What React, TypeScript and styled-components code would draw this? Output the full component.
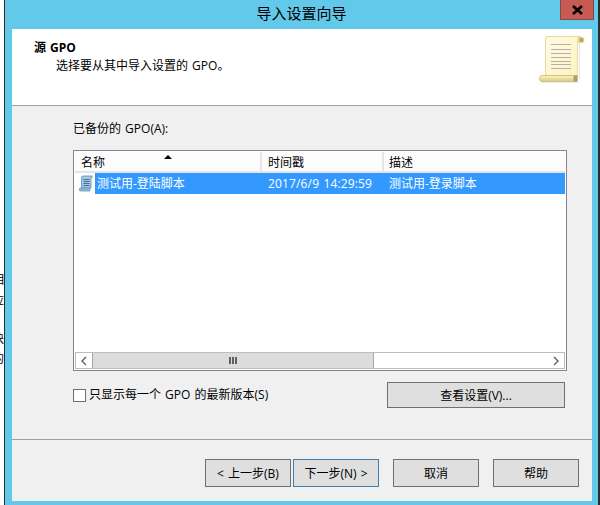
import styled, { createGlobalStyle } from "styled-components";

const GlobalStyle = createGlobalStyle`
  html, body {
    margin: 0;
    padding: 0;
    background: #fff;
  }
  * {
    box-sizing: border-box;
  }
`;

const Page = styled.div`
  display: flex;
  width: 600px;
  height: 505px;
  overflow: hidden;
  font-family: "Open Sans", "Noto Sans CJK SC", sans-serif;
  font-size: 12px;
  word-spacing: 1px;
  color: #000;
`;

const Backdrop = styled.div`
  flex: 0 0 4px;
  padding-top: 272px;
  overflow: hidden;
  background: #fff;
`;

const BackdropLine = styled.div<{ $gap: number }>`
  margin: ${(p) => p.$gap}px 0 0 -8px;
  width: 12px;
  height: 16px;
  line-height: 16px;
`;

const Frame = styled.div`
  position: relative;
  flex: 1;
  display: flex;
  flex-direction: column;
  padding: 0 6px 4px 7px;
  background: #63c9ea;
  border-left: 1px solid #2b2b2b;
  border-right: 2px solid #2b2b2b;
`;

const TitleBar = styled.div`
  flex: 0 0 29px;
  margin: 0 -6px 0 -7px;
  text-align: center;
  font-size: 15px;
  line-height: 26px;
`;

const CloseButton = styled.div`
  position: absolute;
  top: -1px;
  right: 4px;
  width: 34px;
  height: 21px;
  display: flex;
  align-items: center;
  justify-content: center;
  background: #c75a52;
  border: 1px solid #7d4a48;
`;

const Client = styled.div`
  flex: 1;
  display: flex;
  flex-direction: column;
  background: #f0f0f0;
`;

const Header = styled.div`
  flex: 0 0 77px;
  display: flex;
  justify-content: space-between;
  padding: 7px 7px 0 22px;
  background: #fff;
  border-bottom: 1px solid #a0a0a0;
`;

const HeaderTitle = styled.div`
  margin-top: 4px;
  font-weight: 700;
  line-height: 16px;
`;

const HeaderSub = styled.div`
  margin: 2px 0 0 22px;
  line-height: 16px;
`;

const Body = styled.div`
  flex: 1;
  padding: 15px 25px 0 61px;
`;

const FieldLabel = styled.div`
  height: 16px;
  line-height: 16px;
  margin-bottom: 13px;
`;

const ListView = styled.div`
  position: relative;
  height: 221px;
  display: flex;
  flex-direction: column;
  padding: 1px;
  background: #fff;
  border: 1px solid #82878f;
`;

const ColumnRow = styled.div`
  flex: 0 0 21px;
  display: grid;
  grid-template-columns: 187px 122px 1fr;
  background: #fcfcfc;
`;

const Column = styled.div`
  height: 21px;
  padding-left: 6px;
  line-height: 21px;
  border-right: 2px solid #e5e5e5;
  border-bottom: 2px solid #e5e5e5;

  &:last-child {
    border-right: 0;
    padding-left: 5px;
  }
`;

const SortArrow = styled.div`
  position: absolute;
  top: 4px;
  left: 90px;
  width: 0;
  height: 0;
  border-left: 4px solid transparent;
  border-right: 4px solid transparent;
  border-bottom: 4px solid #000;
`;

const ItemRow = styled.div`
  flex: 0 0 21px;
  display: grid;
  grid-template-columns: 187px 122px 1fr;
  align-items: center;
`;

const NameCell = styled.div`
  display: flex;
  align-items: center;
  height: 21px;
`;

const IconSlot = styled.div`
  flex: 0 0 20px;
  display: flex;
  justify-content: flex-end;
  padding-right: 2px;
`;

const Selected = styled.div`
  flex: 1;
  height: 21px;
  padding-left: 2px;
  line-height: 21px;
  background: #3399ff;
  color: #fff;
`;

const SelectedCell = styled.div<{ $pad: number; $spread?: boolean }>`
  height: 21px;
  padding-left: ${(p) => p.$pad}px;
  line-height: 21px;
  letter-spacing: ${(p) => (p.$spread ? "0.15px" : "0")};
  background: #3399ff;
  color: #fff;
`;

const Spacer = styled.div`
  flex: 1;
`;

const ScrollBar = styled.div`
  flex: 0 0 17px;
  display: flex;
  background: #fff;
  border: 1px solid #bdbdbd;
`;

const ScrollArrow = styled.div`
  flex: 0 0 16px;
  display: flex;
  align-items: center;
  justify-content: center;
  background: #fff;
`;

const ScrollThumb = styled.div`
  flex: 0 0 282px;
  display: flex;
  align-items: center;
  justify-content: center;
  gap: 1px;
  background: #dcdcdc;
  border-left: 1px solid #a6a6a6;
  border-right: 1px solid #a6a6a6;
`;

const Grip = styled.span`
  width: 2px;
  height: 7px;
  background: #5f5f5f;
`;

const OptionRow = styled.div`
  display: flex;
  justify-content: space-between;
  align-items: center;
  height: 26px;
  margin-top: 11px;
  padding-right: 2px;
`;

const CheckLabel = styled.div`
  display: flex;
  align-items: center;
  gap: 3px;
  line-height: 16px;
`;

const CheckBox = styled.span`
  width: 13px;
  height: 13px;
  background: #fff;
  border: 1px solid #707070;
`;

const Button = styled.div<{ $default?: boolean; $width?: number }>`
  width: ${(p) => p.$width ?? 86}px;
  height: ${(p) => (p.$width ? 26 : 28)}px;
  display: flex;
  align-items: center;
  justify-content: center;
  background: #dfdfdf;
  border: 1px solid ${(p) => (p.$default ? "#3c7fb1" : "#707070")};
`;

const Footer = styled.div`
  flex: 0 0 62px;
  display: flex;
  justify-content: flex-end;
  gap: 14px;
  padding: 19px 13px 0 0;
  border-top: 1px solid #a0a0a0;
`;

const ButtonPair = styled.div`
  display: flex;
  gap: 2px;
`;

function BigScroll() {
  return (
    <svg width="46" height="48" viewBox="0 0 46 48">
      <defs>
        <linearGradient id="paper" x1="0" y1="0" x2="1" y2="1">
          <stop offset="0" stopColor="#fffbe0" />
          <stop offset="1" stopColor="#fdf3c0" />
        </linearGradient>
        <linearGradient id="roll" x1="0" y1="0" x2="0" y2="1">
          <stop offset="0" stopColor="#fff6c4" />
          <stop offset="1" stopColor="#d9c77e" />
        </linearGradient>
      </defs>
      <path d="M40 7 h1 v36 h-1 z" fill="#000" opacity="0.1" />
      <path d="M2 46 h38 v1 h-38 z" fill="#000" opacity="0.08" />
      <path d="M8 0.500 H42 L38.500 4 V40 H6.500 V3 Q6.500 0.500 8 0.500 Z" fill="url(#paper)" stroke="#e4d9ad" />
      <path d="M38.500 1 h4 q3 0 3 3 t-3 3 h-4z" fill="#e8d995" />
      <path d="M40.500 2 h2.500 q1.500 0 1.500 2 t-1.500 2 h-2.500z" fill="#b9a860" />
      <path d="M3 39.500 H38 V45.500 H3 Q0.500 45.500 0.500 42.500 T3 39.500Z" fill="url(#roll)" stroke="#d3c388" />
      <path d="M34.500 39.500 h4 v6 h-4 z" fill="#b0a064" />
      {[8, 13, 17, 21, 25, 28, 32].map((y) => (
        <rect key={y} x="12" y={y} width="20" height="1" fill="#b3b0b8" />
      ))}
    </svg>
  );
}

function SmallScroll() {
  return (
    <svg width="14" height="17" viewBox="0 0 14 17">
      <path d="M4 1 H13.500 L12 3 V13 H2.500 V3 Q2.500 1 4 1 Z" fill="#a9c6e0" stroke="#5c8db6" strokeWidth="0.8" />
      <path d="M1.500 13 H11 V16 H1.500 Q0.200 16 0.200 14.500 T1.500 13Z" fill="#8db5d8" stroke="#6a97bd" strokeWidth="0.8" />
      <path d="M11.500 1h2v2h-2z" fill="#aeb27a" />
      <path d="M4.500 4.500h6M4.500 6.500h6M4.500 8.500h6M4.500 10.500h6" stroke="#3f6f9c" strokeWidth="1" />
    </svg>
  );
}

export default function App() {
  return (
    <>
      <GlobalStyle />
      <Page>
        <Backdrop>
          <BackdropLine $gap={0}>相</BackdropLine>
          <BackdropLine $gap={5}>应</BackdropLine>
          <BackdropLine $gap={22}>块</BackdropLine>
          <BackdropLine $gap={4}>的</BackdropLine>
        </Backdrop>
        <Frame>
          <TitleBar>导入设置向导</TitleBar>
          <CloseButton>
            <svg width="13" height="10" viewBox="0 0 13 10">
              <path d="M2 1 L11 9 M11 1 L2 9" stroke="#000" strokeWidth="2.600" />
            </svg>
          </CloseButton>
          <Client>
            <Header>
              <div>
                <HeaderTitle>源 GPO</HeaderTitle>
                <HeaderSub>选择要从其中导入设置的 GPO。</HeaderSub>
              </div>
              <BigScroll />
            </Header>
            <Body>
              <FieldLabel>已备份的 GPO(A):</FieldLabel>
              <ListView>
                <SortArrow />
                <ColumnRow>
                  <Column>名称</Column>
                  <Column>时间戳</Column>
                  <Column>描述</Column>
                </ColumnRow>
                <ItemRow>
                  <NameCell>
                    <IconSlot>
                      <SmallScroll />
                    </IconSlot>
                    <Selected>测试用-登陆脚本</Selected>
                  </NameCell>
                  <SelectedCell $pad={6} $spread>2017/6/9 14:29:59</SelectedCell>
                  <SelectedCell $pad={5}>测试用-登录脚本</SelectedCell>
                </ItemRow>
                <Spacer />
                <ScrollBar>
                  <ScrollArrow>
                    <svg width="8" height="10" viewBox="0 0 8 10">
                      <path d="M6 1 L2 5 L6 9" fill="none" stroke="#606060" strokeWidth="1.400" />
                    </svg>
                  </ScrollArrow>
                  <ScrollThumb>
                    <Grip />
                    <Grip />
                    <Grip />
                  </ScrollThumb>
                  <Spacer />
                  <ScrollArrow>
                    <svg width="8" height="10" viewBox="0 0 8 10">
                      <path d="M2 1 L6 5 L2 9" fill="none" stroke="#606060" strokeWidth="1.400" />
                    </svg>
                  </ScrollArrow>
                </ScrollBar>
              </ListView>
              <OptionRow>
                <CheckLabel>
                  <CheckBox />
                  只显示每一个 GPO 的最新版本(S)
                </CheckLabel>
                <Button $width={178}>查看设置(V)...</Button>
              </OptionRow>
            </Body>
            <Footer>
              <ButtonPair>
                <Button>&lt; 上一步(B)</Button>
                <Button $default>下一步(N) &gt;</Button>
              </ButtonPair>
              <Button>取消</Button>
              <Button>帮助</Button>
            </Footer>
          </Client>
        </Frame>
      </Page>
    </>
  );
}
